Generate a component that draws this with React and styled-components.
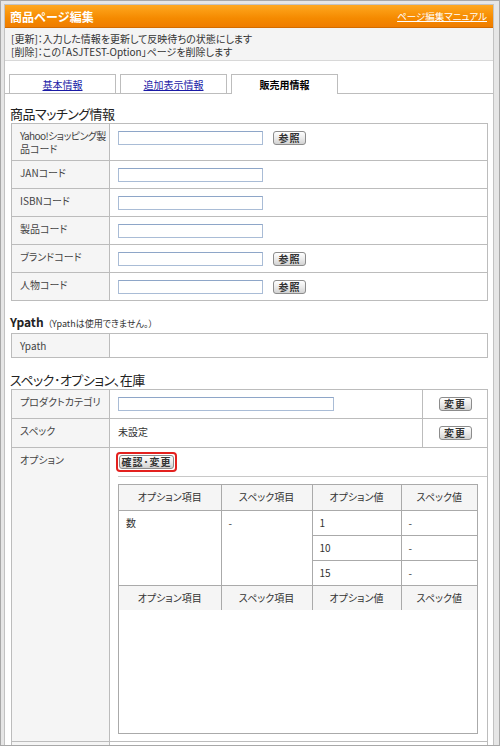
import React from 'react'
import styled, { createGlobalStyle } from 'styled-components'

const GlobalStyle = createGlobalStyle`
    body {
        margin: 0;
        font-family: "Noto Sans CJK JP", "Liberation Sans", sans-serif;
        font-feature-settings: "palt";
        color: #333;
    }
`

const Frame = styled.div`
    width: 500px;
    height: 746px;
    box-sizing: border-box;
    overflow: hidden;
    background: #e6e6e6;
    border: 1px solid #a8a8a8;
    padding: 3px 5px 0 3px;
`

const Panel = styled.div`
    background: #fff;
    border: 1px solid #c2c2c2;
    min-height: 100%;
`

const Header = styled.div`
    height: 22px;
    display: flex;
    align-items: center;
    justify-content: space-between;
    padding: 0 6px 0 5px;
    background: linear-gradient(#ffa820, #f58a00 60%, #ef7d00);
    border-bottom: 1px solid #d36c00;
`

const Title = styled.h1`
    margin: 0;
    font-size: 12px;
    font-weight: bold;
    font-feature-settings: normal;
    color: #fff;
`

const ManualLink = styled.a`
    font-size: 9.5px;
    color: #fff;
    text-decoration: underline;
`

const Notice = styled.div`
    background: #f4f4f4;
    border-bottom: 1px solid #d8d8d8;
    padding: 4px 5px 2px 6px;
    font-size: 10px;
    line-height: 13px;
    color: #333;
`

const TabBar = styled.div`
    display: flex;
    align-items: flex-end;
    gap: 4px;
    margin-top: 13px;
    padding-left: 4px;
    border-bottom: 1px solid #bdbdbd;
`

const Tab = styled.div`
    width: 107px;
    box-sizing: border-box;
    height: ${p => (p.$active ? '20px' : '19px')};
    margin-bottom: ${p => (p.$active ? '-1px' : '0')};
    border: 1px solid #bdbdbd;
    border-bottom: none;
    background: #fff;
    display: flex;
    align-items: center;
    justify-content: center;
    padding-bottom: ${p => (p.$active ? '1px' : '0')};
    font-size: 10px;
    font-weight: ${p => (p.$active ? 'bold' : 'normal')};
    color: #000;
`

const TabLink = styled.a`
    color: #1a1aa6;
    text-decoration: underline;
`

const SectionTitle = styled.h2`
    margin: 0;
    padding: ${p => p.$top}px 5px 0;
    font-size: 13px;
    line-height: 18px;
    font-weight: normal;
    letter-spacing: -0.5px;
    color: #222;
`

const Note = styled.span`
    font-size: 9px;
    margin-left: 4px;
    letter-spacing: 0;
    color: #333;
`

const Strong = styled.span`
    font-size: 12px;
    font-weight: bold;
    letter-spacing: 0;
`

const FormTable = styled.table`
    width: 476px;
    margin: 0 6px;
    border-collapse: collapse;
    border: 1px solid #bcbcbc;
    table-layout: fixed;
`

const Col = styled.col`
    width: ${p => p.$w}px;
`

const LabelCell = styled.td`
    background: #f5f5f5;
    border: 1px solid #bcbcbc;
    padding: 5px 8px 5px;
    vertical-align: top;
    font-size: 10px;
    line-height: 13px;
    color: #444;
`

const TightLine = styled.span`
    white-space: nowrap;
    letter-spacing: -0.6px;
`

const ValueCell = styled.td`
    border: 1px solid #bcbcbc;
    padding: ${p => p.$pad || '7px 8px 6px'};
    vertical-align: top;
    font-size: 10px;
    line-height: 14px;
    text-align: ${p => p.$align || 'left'};
    color: #333;
`

const Field = styled.div`
    display: flex;
    align-items: center;
    gap: 10px;
`

const TextInput = styled.input`
    width: ${p => p.$w}px;
    height: 14px;
    box-sizing: border-box;
    margin: 0;
    border: 1px solid #a9bcd6;
    border-top-color: #8ea6c8;
    background: #fff;
    padding: 0 2px;
`

const SmallButton = styled.button`
    width: ${p => p.$w || 33}px;
    height: 14px;
    box-sizing: border-box;
    margin: 0;
    padding: 0;
    border: 1px solid #8c8c8c;
    border-radius: 3px;
    background: linear-gradient(#ffffff, #e9e9e9 55%, #d2d2d2);
    font-family: inherit;
    font-size: 10px;
    line-height: 12px;
    font-weight: bold;
    letter-spacing: 1px;
    color: #333;
    cursor: pointer;
`

const Highlight = styled.span`
    display: inline-block;
    margin-left: -2px;
    padding: 1px;
    border: 2px solid #e3211f;
    border-radius: 4px;
    line-height: 0;
`

const OptionArea = styled.div`
    margin-top: 4px;
    border-top: 1px solid #c8c8c8;
    padding: 7px 9px 0 0;
`

const OptionBox = styled.div`
    height: 250px;
    box-sizing: border-box;
    border: 1px solid #aaa;
`

const OptionTable = styled.table`
    width: 100%;
    border-collapse: collapse;
    border-style: hidden;
    table-layout: fixed;
`

const OptHead = styled.th`
    height: 25px;
    box-sizing: border-box;
    background: #f5f5f5;
    border: 1px solid #aaa;
    font-size: 10px;
    font-weight: normal;
    color: #333;
    text-align: center;
    padding: 0;
`

const OptCell = styled.td`
    height: 25px;
    box-sizing: border-box;
    border: 1px solid #aaa;
    padding: 5px 7px;
    vertical-align: top;
    font-size: 10px;
    line-height: 14px;
    color: #333;
`

const optionRows = [
    { value: '1', spec: '-' },
    { value: '10', spec: '-' },
    { value: '15', spec: '-' },
]

function OptionHeader() {
    return (
        <tr>
            <OptHead>オプション項目</OptHead>
            <OptHead>スペック項目</OptHead>
            <OptHead>オプション値</OptHead>
            <OptHead>スペック値</OptHead>
        </tr>
    )
}

function CodeRow({ label, button }) {
    return (
        <tr>
            <LabelCell>{label}</LabelCell>
            <ValueCell>
                <Field>
                    <TextInput $w={145} />
                    {button && <SmallButton>参照</SmallButton>}
                </Field>
            </ValueCell>
        </tr>
    )
}

export default function App() {
    return (
        <Frame>
            <GlobalStyle />
            <Panel>
                <Header>
                    <Title>商品ページ編集</Title>
                    <ManualLink href="#">ページ編集マニュアル</ManualLink>
                </Header>
                <Notice>
                    [更新]：入力した情報を更新して反映待ちの状態にします<br />
                    [削除]：この「ASJTEST-Option」ページを削除します
                </Notice>

                <TabBar>
                    <Tab><TabLink href="#">基本情報</TabLink></Tab>
                    <Tab><TabLink href="#">追加表示情報</TabLink></Tab>
                    <Tab $active>販売用情報</Tab>
                </TabBar>

                <SectionTitle $top={11}>商品マッチング情報</SectionTitle>
                <FormTable>
                    <colgroup>
                        <Col $w={98} />
                        <Col $w={378} />
                    </colgroup>
                    <tbody>
                        <CodeRow label={<><TightLine>Yahoo!ショッピング製</TightLine><br />品コード</>} button />
                        <CodeRow label="JANコード" />
                        <CodeRow label="ISBNコード" />
                        <CodeRow label="製品コード" />
                        <CodeRow label="ブランドコード" button />
                        <CodeRow label="人物コード" button />
                    </tbody>
                </FormTable>

                <SectionTitle $top={12}>
                    <Strong>Ypath</Strong><Note>（Ypathは使用できません。）</Note>
                </SectionTitle>
                <FormTable>
                    <colgroup>
                        <Col $w={98} />
                        <Col $w={378} />
                    </colgroup>
                    <tbody>
                        <tr>
                            <LabelCell>Ypath</LabelCell>
                            <ValueCell $pad="6px 8px 4px" />
                        </tr>
                    </tbody>
                </FormTable>

                <SectionTitle $top={13}>スペック･オプション、在庫</SectionTitle>
                <FormTable>
                    <colgroup>
                        <Col $w={98} />
                        <Col $w={313} />
                        <Col $w={65} />
                    </colgroup>
                    <tbody>
                        <tr>
                            <LabelCell>プロダクトカテゴリ</LabelCell>
                            <ValueCell $pad="7px 8px 7px">
                                <Field><TextInput $w={216} /></Field>
                            </ValueCell>
                            <ValueCell $pad="7px 0 7px" $align="center">
                                <SmallButton>変更</SmallButton>
                            </ValueCell>
                        </tr>
                        <tr>
                            <LabelCell>スペック</LabelCell>
                            <ValueCell $pad="6px 8px 8px">未設定</ValueCell>
                            <ValueCell $pad="7px 0 7px" $align="center">
                                <SmallButton>変更</SmallButton>
                            </ValueCell>
                        </tr>
                        <tr>
                            <LabelCell>オプション</LabelCell>
                            <ValueCell colSpan={2} $pad="4px 0 7px 8px">
                                <Highlight>
                                    <SmallButton $w={55}>確認･変更</SmallButton>
                                </Highlight>
                                <OptionArea>
                                    <OptionBox>
                                        <OptionTable>
                                            <colgroup>
                                                <Col $w={102} />
                                                <Col $w={91} />
                                                <Col $w={89} />
                                                <col />
                                            </colgroup>
                                            <tbody>
                                                <OptionHeader />
                                                {optionRows.map((row, i) => (
                                                    <tr key={row.value}>
                                                        {i === 0 && <OptCell rowSpan={3}>数</OptCell>}
                                                        {i === 0 && <OptCell rowSpan={3}>-</OptCell>}
                                                        <OptCell>{row.value}</OptCell>
                                                        <OptCell>{row.spec}</OptCell>
                                                    </tr>
                                                ))}
                                                <OptionHeader />
                                            </tbody>
                                        </OptionTable>
                                    </OptionBox>
                                </OptionArea>
                            </ValueCell>
                        </tr>
                        <tr>
                            <LabelCell>&nbsp;</LabelCell>
                            <ValueCell colSpan={2}>&nbsp;</ValueCell>
                        </tr>
                    </tbody>
                </FormTable>
            </Panel>
        </Frame>
    )
}
